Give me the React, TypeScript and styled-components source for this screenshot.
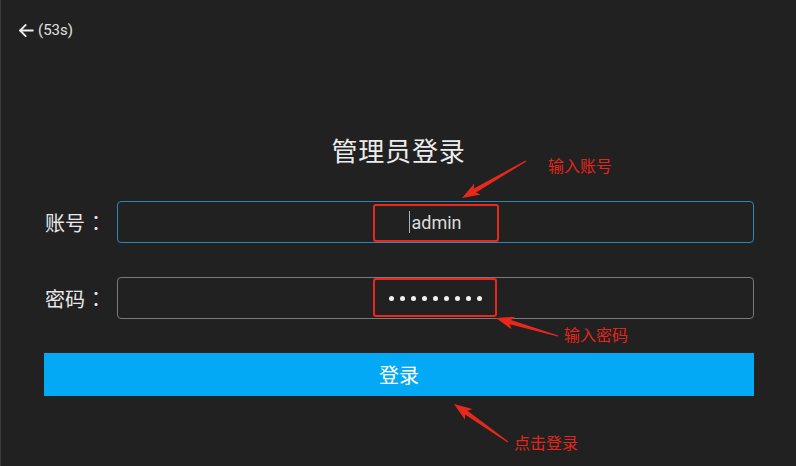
import styled, { createGlobalStyle } from 'styled-components';

const GlobalStyle = createGlobalStyle`
  html, body {
    margin: 0;
    padding: 0;
    background: #212121;
  }
  * {
    box-sizing: border-box;
  }
`;

const Page = styled.div`
  position: relative;
  width: 796px;
  height: 466px;
  overflow: hidden;
  background: #212121;
  border-left: 1px solid #3c3c3c;
  font-family: Roboto, 'Noto Sans CJK SC', sans-serif;
  color: #e6e6e6;
`;

const TopBar = styled.div`
  height: 60px;
  display: flex;
  align-items: center;
  padding-left: 16px;
  gap: 2px;
  font-size: 15px;
  color: #e0e0e0;

  svg {
    display: block;
  }
`;

const Title = styled.h1`
  margin: 72px 0 0;
  height: 36px;
  line-height: 36px;
  text-align: center;
  font-family: 'Noto Sans CJK SC', sans-serif;
  font-size: 26px;
  font-weight: 400;
  color: #ececec;
  letter-spacing: 0.8px;
`;

const Form = styled.div`
  display: flex;
  flex-direction: column;
  gap: 34px;
  padding: 33px 42px 0 43px;
`;

const Row = styled.div`
  display: flex;
  align-items: center;
`;

const Label = styled.div`
  width: 73px;
  display: flex;
  align-items: center;
  font-family: 'Noto Sans CJK SC', sans-serif;
  font-size: 20px;
  color: #e8e8e8;
  padding-left: 1px;
`;

const Colon = styled.span`
  font-family: 'Noto Sans CJK TC', sans-serif;
  margin-left: 1px;
`;

const Field = styled.div<{ $focused?: boolean }>`
  flex: 1;
  height: 42px;
  border: 1px solid ${(p) => (p.$focused ? '#2e86b8' : '#7a7a7a')};
  border-radius: 4px;
  display: flex;
  align-items: center;
  justify-content: center;
  font-size: 18px;
  color: #dcdcdc;
`;

const Caret = styled.span`
  display: inline-block;
  width: 1px;
  height: 22px;
  background: #b0b0b0;
  margin-right: 1px;
`;

const Dots = styled.div`
  display: flex;
  gap: 6px;
`;

const Dot = styled.span`
  width: 5px;
  height: 5px;
  border-radius: 50%;
  background: #f2f2f2;
`;

const LoginButton = styled.button`
  height: 43px;
  border: none;
  border-radius: 0;
  background: #03a9f4;
  color: #ffffff;
  font-family: 'Noto Sans CJK SC', sans-serif;
  font-size: 20px;
  cursor: pointer;
`;

const Overlay = styled.svg`
  position: absolute;
  left: 0;
  top: 0;
  pointer-events: none;
`;

const Note = styled.span<{ $x: number; $y: number }>`
  position: absolute;
  left: ${(p) => p.$x}px;
  top: ${(p) => p.$y}px;
  font-family: 'Noto Sans CJK SC', sans-serif;
  font-size: 16px;
  line-height: 20px;
  color: #e3261c;
`;

type Pt = [number, number];

function arrowPoints(tail: Pt, tip: Pt): string {
  const dx = tip[0] - tail[0];
  const dy = tip[1] - tail[1];
  const len = Math.hypot(dx, dy);
  const ux = dx / len;
  const uy = dy / len;
  const nx = -uy;
  const ny = ux;
  const headLen = 15;
  const headW = 13;
  const base: Pt = [tip[0] - ux * headLen, tip[1] - uy * headLen];
  const barb: Pt = [base[0] - ux * 3, base[1] - uy * 3];
  const pts: Pt[] = [
    [tail[0] + nx * 0.6, tail[1] + ny * 0.6],
    [base[0] + nx * 2.2, base[1] + ny * 2.2],
    [barb[0] + nx * (headW / 2), barb[1] + ny * (headW / 2)],
    tip,
    [barb[0] - nx * (headW / 2), barb[1] - ny * (headW / 2)],
    [base[0] - nx * 2.2, base[1] - ny * 2.2],
    [tail[0] - nx * 0.6, tail[1] - ny * 0.6],
  ];
  return pts.map((p) => `${p[0].toFixed(1)},${p[1].toFixed(1)}`).join(' ');
}

const RED = '#e8281d';

const App: React.FC = () => {
  return (
    <>
      <GlobalStyle />
      <Page>
        <TopBar>
          <svg width="19" height="19" viewBox="0 0 24 24" fill="none" stroke="#eeeeee" strokeWidth="2.3" strokeLinecap="round" strokeLinejoin="round">
            <path d="M20 12H4" />
            <path d="M11 5l-7 7 7 7" />
          </svg>
          <span>(53s)</span>
        </TopBar>
        <Title>管理员登录</Title>
        <Form>
          <Row>
            <Label>
              账号<Colon>：</Colon>
            </Label>
            <Field $focused>
              <Caret />
              <span>admin</span>
            </Field>
          </Row>
          <Row>
            <Label>
              密码<Colon>：</Colon>
            </Label>
            <Field>
              <Dots>
                {Array.from({ length: 9 }).map((_, i) => (
                  <Dot key={i} />
                ))}
              </Dots>
            </Field>
          </Row>
          <LoginButton>登录</LoginButton>
        </Form>

        <Overlay width="796" height="466" viewBox="0 0 796 466">
          <rect x="373" y="205" width="124" height="36" rx="2" fill="none" stroke={RED} strokeWidth="2" />
          <rect x="373" y="279" width="122" height="37" rx="2" fill="none" stroke={RED} strokeWidth="2" />
          <polygon points={arrowPoints([525, 161], [461, 198])} fill={RED} />
          <polygon points={arrowPoints([557, 336], [495, 318])} fill={RED} />
          <polygon points={arrowPoints([507, 442], [453, 404])} fill={RED} />
        </Overlay>
        <Note $x={547} $y={155}>输入账号</Note>
        <Note $x={563} $y={324}>输入密码</Note>
        <Note $x={513} $y={432}>点击登录</Note>
      </Page>
    </>
  );
};

export default App;
